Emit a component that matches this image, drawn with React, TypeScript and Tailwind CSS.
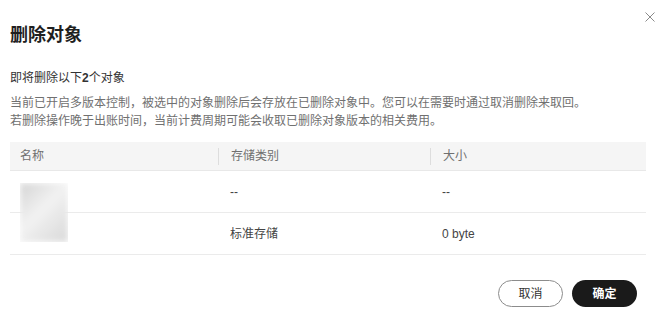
import React from "react";

interface ObjectRow {
  storage: string;
  size: string;
}

const rows: ObjectRow[] = [
  { storage: "--", size: "--" },
  { storage: "标准存储", size: "0 byte" },
];

const DeleteObjectsDialog: React.FC = () => {
  return (
    <div className="relative w-[661px] h-[317px] bg-white pl-[10px] pr-[15px] pt-[23px] font-['Liberation_Sans','Noto_Sans_CJK_SC',sans-serif] text-[#333]">
      {/* close */}
      <button className="absolute top-[12px] right-[6px] w-[10px] h-[10px]">
        <svg width="10" height="10" viewBox="0 0 10 10" fill="none" stroke="#8a8a8a" strokeWidth="1">
          <path d="M0.5 0.5 L9.5 9.5 M9.5 0.5 L0.5 9.5" />
        </svg>
      </button>

      <h2 className="text-[18px] leading-[24px] font-bold text-[#1f1f1f]">删除对象</h2>

      <p className="mt-[22px] text-[12px] leading-[18px] text-[#333]">
        即将删除以下<span className="font-bold">2</span>个对象
      </p>
      <div className="mt-[7px] text-[12px] leading-[18px] text-[#707070]">
        <p>当前已开启多版本控制，被选中的对象删除后会存放在已删除对象中。您可以在需要时通过取消删除来取回。</p>
        <p>若删除操作晚于出账时间，当前计费周期可能会收取已删除对象版本的相关费用。</p>
      </div>

      {/* table */}
      <div className="relative mt-[12px] w-[636px] text-[12px]">
        <div className="grid grid-cols-[208px_212px_216px] h-[29px] items-center bg-[#f5f5f5] border-b border-[#e8e8e8] text-[#707070]">
          <div className="pl-[10px]">名称</div>
          <div className="pl-[12px] border-l border-[#ddd] h-[17px] flex items-center">存储类别</div>
          <div className="pl-[12px] border-l border-[#ddd] h-[17px] flex items-center">大小</div>
        </div>
        {rows.map((r, i) => (
          <div
            key={i}
            className="grid grid-cols-[208px_212px_216px] h-[42px] items-center border-b border-[#ebebeb] text-[#444]"
          >
            <div />
            <div className="pl-[12px]">{r.storage}</div>
            <div className="pl-[12px]">{r.size}</div>
          </div>
        ))}
        {/* blurred object names */}
        <div className="absolute left-[10px] top-[41px] w-[48px] h-[59px] overflow-hidden">
          <div className="w-full h-full bg-[linear-gradient(135deg,#d4d4d4_0%,#f2f2f2_45%,#e6e6e6_70%,#d8d8d8_100%)] blur-[3px]" />
        </div>
      </div>

      {/* footer */}
      <div className="mt-[25px] flex justify-end gap-[9px] pr-[9px]">
        <button className="w-[65px] h-[27px] rounded-full border border-[#8c8c8c] text-[12px] text-[#333] bg-white">
          取消
        </button>
        <button className="w-[65px] h-[27px] rounded-full bg-[#1a1a1a] text-[12px] font-bold text-white">
          确定
        </button>
      </div>
    </div>
  );
};

export default function App() {
  return <DeleteObjectsDialog />;
}
